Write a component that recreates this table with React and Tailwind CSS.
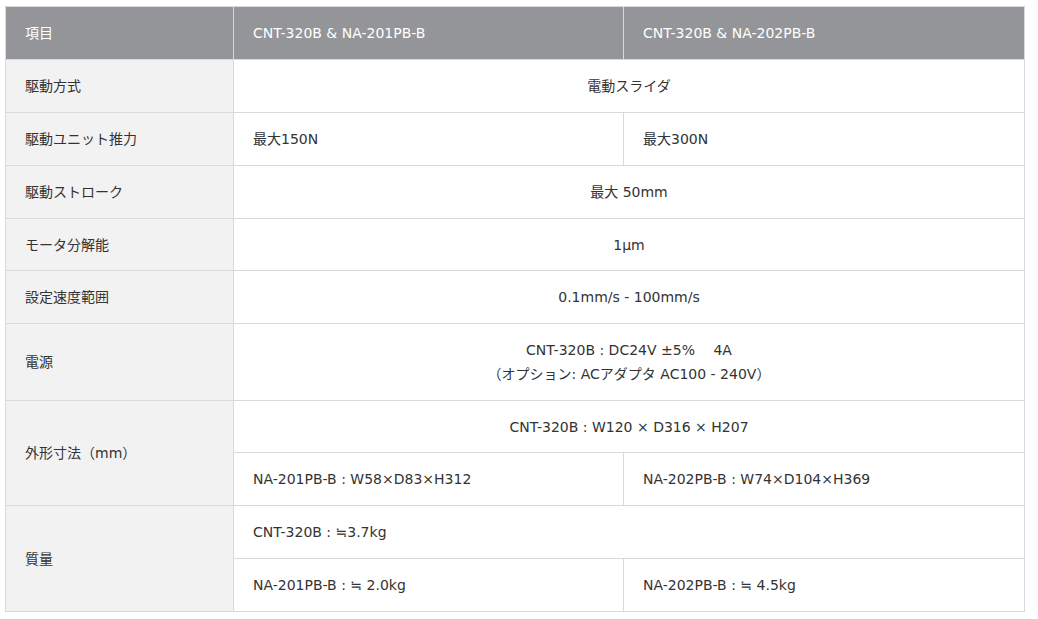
import React from 'react';

const th = 'border border-[#d9d9d9] bg-[#939598] text-white font-normal text-left px-[19px] py-[14px] leading-6';
const label = 'border border-[#d9d9d9] bg-[#f2f2f2] text-left px-[19px] py-[14px] leading-6 align-middle';
const cell = 'border border-[#d9d9d9] bg-white text-left px-[19px] py-[14px] leading-6';
const center = 'border border-[#d9d9d9] bg-white text-center px-[19px] py-[14px] leading-6';
// a couple of rows are 1px shorter in the reference
const short = 'pb-[13px]';

export default function App() {
    return (
        <div className="bg-white min-h-screen pt-[6px] pl-[5px]" style={{ fontFamily: '"DejaVu Sans", "Noto Sans CJK JP", sans-serif' }}>
            <table className="w-[1020px] border-collapse table-fixed text-[14px] text-[#333]">
                <colgroup>
                    <col className="w-[228px]" />
                    <col className="w-[390px]" />
                    <col />
                </colgroup>
                <thead>
                    <tr>
                        <th className={th}>項目</th>
                        <th className={th}>CNT-320B &amp; NA-201PB-B</th>
                        <th className={th}>CNT-320B &amp; NA-202PB-B</th>
                    </tr>
                </thead>
                <tbody>
                    <tr>
                        <td className={label}>駆動方式</td>
                        <td className={center} colSpan={2}>電動スライダ</td>
                    </tr>
                    <tr>
                        <td className={label}>駆動ユニット推力</td>
                        <td className={cell}>最大150N</td>
                        <td className={cell}>最大300N</td>
                    </tr>
                    <tr>
                        <td className={label}>駆動ストローク</td>
                        <td className={center} colSpan={2}>最大 50mm</td>
                    </tr>
                    <tr>
                        <td className={`${label} ${short}`}>モータ分解能</td>
                        <td className={`${center} ${short}`} colSpan={2}>1μm</td>
                    </tr>
                    <tr>
                        <td className={label}>設定速度範囲</td>
                        <td className={center} colSpan={2}>0.1mm/s - 100mm/s</td>
                    </tr>
                    <tr>
                        <td className={label}>電源</td>
                        <td className={center} colSpan={2}>
                            CNT-320B : DC24V ±5%　 4A<br />
                            （オプション: ACアダプタ AC100 - 240V）
                        </td>
                    </tr>
                    <tr>
                        <td className={label} rowSpan={2}>外形寸法（mm）</td>
                        <td className={`${center} ${short}`} colSpan={2}>CNT-320B : W120 × D316 × H207</td>
                    </tr>
                    <tr>
                        <td className={cell}>NA-201PB-B : W58×D83×H312</td>
                        <td className={cell}>NA-202PB-B : W74×D104×H369</td>
                    </tr>
                    <tr>
                        <td className={label} rowSpan={2}>質量</td>
                        <td className={cell} colSpan={2}>CNT-320B : ≒3.7kg</td>
                    </tr>
                    <tr>
                        <td className={cell}>NA-201PB-B : ≒ 2.0kg</td>
                        <td className={cell}>NA-202PB-B : ≒ 4.5kg</td>
                    </tr>
                </tbody>
            </table>
        </div>
    );
}
